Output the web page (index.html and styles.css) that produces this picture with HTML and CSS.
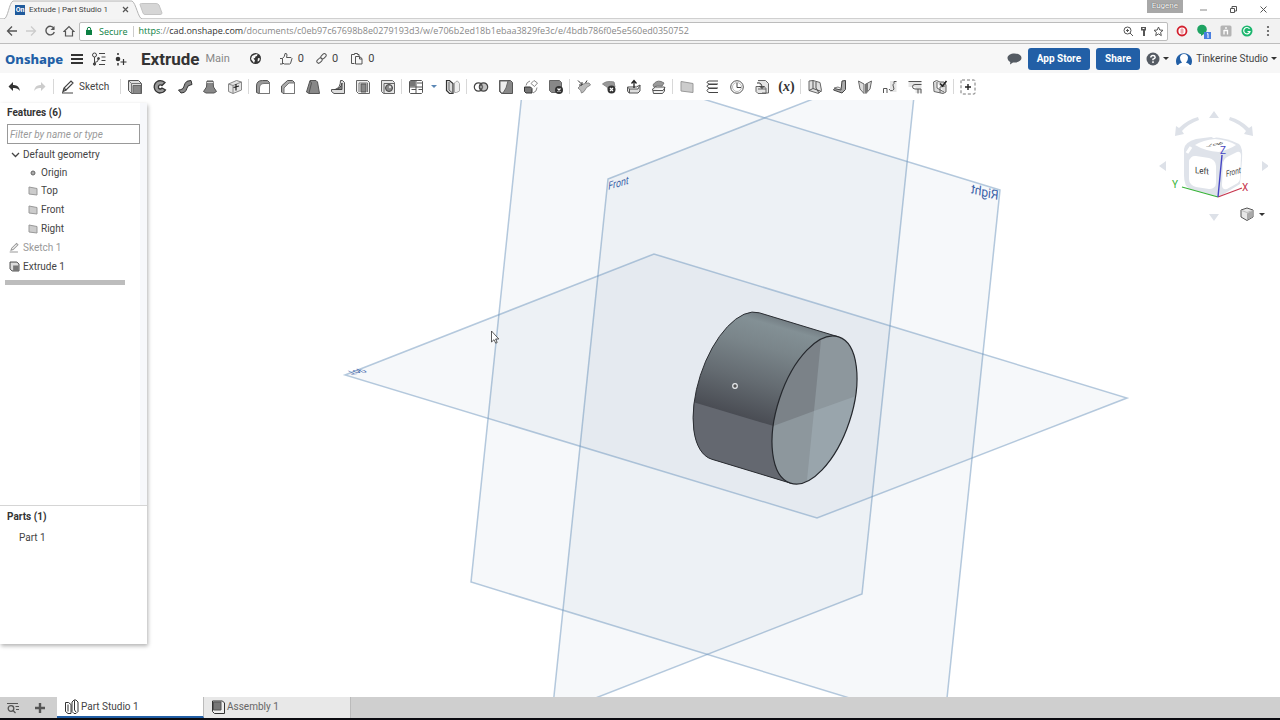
FILE: index.html
```html
<!DOCTYPE html>
<html lang="en">
<head>
<meta charset="utf-8">
<title>Extrude | Part Studio 1</title>
<link rel="stylesheet" href="styles.css">
</head>
<body>
<div class="window">
  <div class="tabstrip">
    <div class="btab">
      <svg class="btab-shape" viewBox="0 0 138 19" preserveAspectRatio="none" aria-hidden="true"><path d="M0 19C4 18 5 3 9 1H128C132 3 134 18 138 19" fill="#f4f4f4" stroke="#b4b4b4"/></svg>
      <span class="favicon">On</span>
      <span class="btab-title">Extrude | Part Studio 1</span>
      <button class="plain" aria-label="Close tab"><svg width="7" height="7" viewBox="0 0 7 7"><path d="M1 1l5 5M6 1L1 6" stroke="#555" stroke-width="1.2"/></svg></button>
    </div>
    <button class="plain newtab" aria-label="New tab"><svg width="24" height="12" viewBox="0 0 24 12"><path d="M1 1.500Q1 .5 2.500.5H17Q19 .5 20 2L23 10Q23 11.500 21 11.500H6Q4.500 11.500 4 10z" fill="#d6d6d6" stroke="#c4c4c4"/></svg></button>
    <span class="user">Eugene</span>
    <div class="winctl">
      <button class="plain" aria-label="Minimize"><svg width="9" height="9"><path d="M1 5h7" stroke="#888"/></svg></button>
      <button class="plain" aria-label="Restore"><svg width="9" height="9" fill="none" stroke="#555"><path d="M1.500 3.500h4v4h-4zM3 3V1.500h4.500V6H6"/></svg></button>
      <button class="plain" aria-label="Close window"><svg width="9" height="9"><path d="M1.500 1.500l6 6M7.500 1.500l-6 6" stroke="#555"/></svg></button>
    </div>
  </div>

  <div class="navbar">
    <button class="plain" aria-label="Back"><svg width="12" height="12" fill="none" stroke="#555" stroke-width="1.300"><path d="M11 6H2M6 1.500L1.500 6 6 10.500"/></svg></button>
    <button class="plain" aria-label="Forward"><svg width="12" height="12" fill="none" stroke="#ccc" stroke-width="1.300"><path d="M1 6h9M6 1.500L10.500 6 6 10.500"/></svg></button>
    <button class="plain" aria-label="Reload"><svg width="12" height="12" fill="none" stroke="#555" stroke-width="1.400"><path d="M10 3.500A4.300 4.300 0 1 0 10.300 7"/><path d="M10.500 1v4h-4z" fill="#555" stroke="none"/></svg></button>
    <button class="plain" aria-label="Home"><svg width="12" height="12" fill="none" stroke="#555" stroke-width="1.200"><path d="M1 6.500L6 1.500l5 5H9.500V11h-7V6.500z"/></svg></button>
    <div class="address">
      <svg width="8" height="10" viewBox="0 0 8 10"><path d="M1 4h6v5H1z" fill="#0b8043"/><path d="M2.300 4.500V3a1.700 1.700 0 0 1 3.400 0v1.500" fill="none" stroke="#0b8043"/></svg>
      <span class="secure">Secure</span>
      <span class="url"><span class="https">https</span>://<b>cad.onshape.com</b>/documents/c0eb97c67698b8e0279193d3/w/e706b2ed18b1ebaa3829fe3c/e/4bdb786f0e5e560ed0350752</span>
      <button class="plain" aria-label="Zoom"><svg width="11" height="11" fill="none" stroke="#555"><circle cx="4.500" cy="4.500" r="3.500"/><path d="M7 7l3 3M3 4.500h3M4.500 3v3"/></svg></button>
      <button class="plain" aria-label="Passwords"><svg width="9" height="11"><path d="M2 1h5v3.500H6V10H4V4.500H2z" fill="#555"/><path d="M3.500 2.500h2" stroke="#fff"/></svg></button>
      <button class="plain" aria-label="Bookmark"><svg width="11" height="11" viewBox="0 0 11 11"><path d="M5.500 1l1.300 3 3.200.3-2.400 2.100.7 3.200-2.800-1.700-2.800 1.700.7-3.200L1 4.300 4.200 4z" fill="none" stroke="#555"/></svg></button>
    </div>
    <div class="exts">
      <button class="plain" aria-label="Ad blocker"><svg width="14" height="14"><circle cx="7" cy="7" r="4.500" fill="#fff" stroke="#d3202e" stroke-width="1.800"/><path d="M5.500 9V5.500L7 4l1.500 1.500V9L7 10z" fill="#d3202e" opacity=".4"/></svg></button>
      <button class="plain" aria-label="Notifications"><svg width="16" height="16"><circle cx="6" cy="6.500" r="4.800" fill="#1ea362"/><path d="M5 11h3l-3 2z" fill="#1ea362"/><rect x="8" y="9" width="7" height="7" fill="#4a7fe0"/><path d="M11 11l1-.5V15" fill="none" stroke="#fff"/></svg></button>
      <button class="plain" aria-label="Honey"><svg width="14" height="14"><rect x="1.500" y="1.500" width="11" height="11" rx="1.500" fill="#b4b4b4"/><path d="M5 6v4.500M5 6.500h3.500v4M7 3v2" stroke="#fff" stroke-width="1.300" fill="none"/></svg></button>
      <button class="plain" aria-label="Grammar"><svg width="14" height="14"><circle cx="7" cy="7" r="5.500" fill="#1cb66e"/><path d="M9.500 4.800A3.200 3.200 0 1 0 10 7.500H7.500" fill="none" stroke="#fff" stroke-width="1.200"/></svg></button>
      <button class="plain" aria-label="Menu"><svg width="4" height="12" fill="#555"><circle cx="2" cy="2" r="1.100"/><circle cx="2" cy="6" r="1.100"/><circle cx="2" cy="10" r="1.100"/></svg></button>
    </div>
  </div>

  <header class="header">
    <a class="logo" href="#">Onshape</a>
    <button class="plain" aria-label="Documents menu"><svg width="14" height="14"><path d="M1 3h12M1 7h12M1 11h12" stroke="#333" stroke-width="2"/></svg></button>
    <button class="plain" aria-label="Versions"><svg width="16" height="14" fill="none" stroke="#444"><circle cx="3.500" cy="3" r="2"/><path d="M3.500 5v8M3.500 10.500q4 0 4-4"/><circle cx="3.500" cy="12" r="1.200" fill="#444"/><circle cx="7.500" cy="6.500" r="1" fill="#444"/><path d="M8 1.500h6M10.500 5h4M10.500 8.500h4M8 12.500h6"/></svg></button>
    <button class="plain" aria-label="Create version"><svg width="13" height="14"><circle cx="4" cy="7" r="2.300" fill="#333"/><path d="M4 1v2M4 11v2.500" stroke="#333" stroke-width="1.500"/><path d="M9.500 7v6M6.500 10h6" stroke="#333" stroke-width="1.200"/></svg></button>
    <h1 class="doc">Extrude</h1>
    <span class="branch">Main</span>
    <svg class="globe" width="13" height="13" viewBox="0 0 13 13"><circle cx="6.500" cy="6.500" r="5.500" fill="#333"/><path d="M6 2.500L8.500 2l-.5 2-1.500.5L6 6 4.500 6.500 6 8.500l-1 2.500-1.500-2L2 7l1-3zM9 6l2 .5-1 2.500-1.500.5z" fill="#f7f7f7"/></svg>
    <button class="plain stat"><svg width="14" height="13" fill="none" stroke="#555"><path d="M1 6.500h2.500V12H1M3.500 6.500Q6 4.500 6 1.500q2-.5 2 1.500l-.5 2.500H12l1 1-1.500 5-1 .5h-5l-2-1"/></svg>0</button>
    <button class="plain stat"><svg width="11" height="11" fill="none" stroke="#555"><rect x="4.500" y="1.500" width="6" height="3.600" rx="1.800" transform="rotate(-45 7.500 3.300)"/><rect x=".5" y="5.800" width="6" height="3.600" rx="1.800" transform="rotate(-45 3.500 7.600)"/></svg>0</button>
    <button class="plain stat"><svg width="13" height="13" fill="none" stroke="#555"><path d="M4.500 11.500h-3v-9h3V1.500h3v1H9v2M5.500 4.500h4l2.500 2v5.500H5.500zM9.500 4.500v2.500H12"/></svg>0</button>
    <div class="header-right">
      <button class="plain" aria-label="Comments"><svg width="15" height="12"><path d="M7.500.5C11.500.5 14.500 2.500 14.500 5S11.500 9.500 7.500 9.500H6L3 11.500 3.300 9C1.500 8 .5 6.500.5 5 .5 2.500 3.500.5 7.500.5z" fill="#555b63"/></svg></button>
      <button class="btn">App Store</button>
      <button class="btn">Share</button>
      <button class="plain help" aria-label="Help"><svg width="14" height="14"><circle cx="7" cy="7" r="6.500" fill="#555b63"/><path d="M4.800 5.500Q5 3.500 7 3.500t2.200 1.800Q9.200 6.500 7 7.300v1M7 9.300v1.700" fill="none" stroke="#fff" stroke-width="1.500"/></svg><i class="caret"></i></button>
      <button class="plain account"><svg width="18" height="17" viewBox="0 0 18 17"><path d="M2 15A8 8 0 1 1 16 15" fill="#225fa6"/><path d="M2.500 16.500q.8-3 4.500-3.800Q4.800 10.500 5 7.500 5.500 4 9 4t4 3.500q.2 3-2 5.200 3.700.8 4.500 3.800z" fill="#fff"/></svg>Tinkerine Studio<i class="caret"></i></button>
    </div>
  </header>

  <div class="toolbar" role="toolbar" aria-label="Part studio tools">
    <button class="tool" aria-label="Undo"><svg viewBox="0 0 16 16"><path d="M6 3v3q6-.5 7 6-2.500-3.500-7-3v3L1.500 7.500z" fill="#333"/></svg></button>
    <button class="tool" aria-label="Redo"><svg viewBox="0 0 16 16"><path d="M9 3v3Q3 5.500 2 12q2.500-3.500 7-3v3l4.500-4.500z" fill="#ccc"/></svg></button>
    <i class="sep"></i>
    <button class="tool sketch"><svg viewBox="0 0 16 16"><path d="M3 12.500l1-3.500 7-7 2 2-7 7-3 1.500zM4 9l2.500 2.500M2 14h11" fill="none" stroke="#444" stroke-width="1.200"/></svg>Sketch</button>
    <i class="sep"></i>
    <button class="tool" aria-label="Extrude"><svg viewBox="0 0 16 16"><path d="M1.500 1.500h10l3 3v10h-10l-3-3z" fill="#ddd" stroke="#555"/><path d="M1.500 1.500l3 3h10M4.500 4.500v10" fill="none" stroke="#777"/><path d="M6 6.500h8v8H6z" fill="#888" stroke="#666"/></svg></button>
    <button class="tool" aria-label="Revolve"><svg viewBox="0 0 16 16"><path d="M13 3.500Q10 1 6 2 2 4 2.200 8.500 3 13 7.500 14q4 0 6-3L10 9q-2 2-3.500 0-.5-2 1-3 1.500-.5 2.500.5z" fill="#999" stroke="#333" stroke-width="1.300"/></svg></button>
    <button class="tool" aria-label="Sweep"><svg viewBox="0 0 16 16"><path d="M1.500 11l2.500 3q4 0 5-2.500t2-4.500q2-1 4-1.500L14 1.500Q9 1.500 8 4.500T6 9.500Q4 11 1.500 11z" fill="#888" stroke="#333"/></svg></button>
    <button class="tool" aria-label="Loft"><svg viewBox="0 0 16 16"><path d="M5 2h6l.5 6 3 4.500L12 14H4l-2.500-1.500L4.500 8z" fill="#888" stroke="#555"/><path d="M5 3.500h6" stroke="#ddd"/></svg></button>
    <button class="tool" aria-label="Thicken"><svg viewBox="0 0 16 16"><path d="M1.500 5l8-3.500 5 1.500v8L6 14.500l-4.500-2zM1.500 5L6 6.500v8M6 6.500L14.500 3" fill="#e4e4e4" stroke="#888"/><path d="M9 5v6.500M6.500 8.500L12 7" stroke="#222" stroke-width="1.200"/></svg></button>
    <i class="sep"></i>
    <button class="tool" aria-label="Fillet"><svg viewBox="0 0 16 16"><path d="M1.500 13.500V7q0-5.500 6-5.500h5L14.500 3.500v11H4z" fill="#999" stroke="#555"/><path d="M4.500 14V9q0-4.500 4.500-4.500h5.500v10H4.500z" fill="#fff" stroke="#777"/></svg></button>
    <button class="tool" aria-label="Chamfer"><svg viewBox="0 0 16 16"><path d="M1.500 13V7l6-5.500h5l2 2v11H3z" fill="#aaa" stroke="#555"/><path d="M4 14V9l5-5h5.500v10.500H4z" fill="#fff" stroke="#777"/></svg></button>
    <button class="tool" aria-label="Draft"><svg viewBox="0 0 16 16"><path d="M5 1.500h6l1.500 1.500 2 11.500H4L1.500 13z" fill="#888" stroke="#555"/><path d="M5 2L6.500 4 4 14" fill="none" stroke="#555"/></svg></button>
    <button class="tool" aria-label="Rib"><svg viewBox="0 0 16 16"><path d="M10.500 1.500h2l2 2v11H4l-2.500-2v-2h4q5-2 5-9z" fill="#ddd" stroke="#555"/><path d="M12 4v6.500H4.500Q11 10 12 4z" fill="#888" stroke="#444"/></svg></button>
    <button class="tool" aria-label="Shell"><svg viewBox="0 0 16 16"><path d="M1.500 1.500h11l2 2v11h-11l-2-2z" fill="#eee" stroke="#666"/><path d="M4 13V4h8.500v9" fill="none" stroke="#777"/><path d="M6 5h5v8H6z" fill="#888" stroke="#555"/></svg></button>
    <button class="tool" aria-label="Hole"><svg viewBox="0 0 16 16"><path d="M1.500 1.500h11l2 2v11h-11l-2-2zM4 4.500h10M4 4.500v10" fill="#e5e5e5" stroke="#666"/><circle cx="9" cy="9" r="3.500" fill="#888" stroke="#444"/><circle cx="10" cy="8" r="1.200" fill="#ddd"/></svg></button>
    <i class="sep"></i>
    <button class="tool" aria-label="Linear pattern"><svg viewBox="0 0 16 16"><path d="M2 2h5.500v5.500H2z" fill="#777"/><path d="M1.500 2.500l1-1h11l1 1v11l-1 1h-11l-1-1zM8 1.500v13M1.500 8h13M9 4h5M10.500 10.500h4M3.500 10.500H8" fill="none" stroke="#555"/></svg></button>
    <button class="plain drop" aria-label="More patterns"><i class="caret blue"></i></button>
    <button class="tool" aria-label="Mirror"><svg viewBox="0 0 16 16"><path d="M1.500 1.500h3l3.500 3v10H4.500l-3-3z" fill="#ddd" stroke="#333" stroke-width="1.200"/><path d="M4 3v8l3.500 3" fill="none" stroke="#666"/><path d="M9.500 4v9.500h2l3-1.500V4.500l-2-2.500-1.500.5z" fill="#eee" stroke="#aaa"/></svg></button>
    <i class="sep"></i>
    <button class="tool" aria-label="Boolean"><svg viewBox="0 0 16 16"><circle cx="5.500" cy="8" r="4.200" fill="none" stroke="#444" stroke-width="1.200"/><circle cx="10.500" cy="8" r="4.200" fill="#aaa" fill-opacity=".7" stroke="#444" stroke-width="1.200"/><path d="M8 4.700Q10.500 8 8 11.300 5.500 8 8 4.700" fill="#ddd" stroke="#444"/></svg></button>
    <button class="tool" aria-label="Split"><svg viewBox="0 0 16 16"><path d="M1.500 1.500h11l2 2v11h-11l-2-2z" fill="#888" stroke="#555"/><path d="M2 2h8L8 9l-3 5H3.500L2 12z" fill="#eee" stroke="#666"/></svg></button>
    <button class="tool" aria-label="Transform"><svg viewBox="0 0 16 16"><path d="M1.500 8h6l1.500 1.500V14H3l-1.500-1.500z" fill="#777" stroke="#333"/><path d="M3 6.500Q3.500 3 7 2M8 4.500l3-3 3.500 2.500-3 3.500zM14 8.500q0 4-4 5.500" fill="none" stroke="#888"/></svg></button>
    <button class="tool" aria-label="Delete part"><svg viewBox="0 0 16 16"><path d="M1.500 1.500h10l2 2v10h-10l-2-2z" fill="#888" stroke="#666"/><circle cx="11" cy="11" r="4" fill="#333"/><path d="M9.500 9.500l3 3M12.500 9.500l-3 3" stroke="#fff" stroke-width="1.200"/></svg></button>
    <i class="sep"></i>
    <button class="tool" aria-label="Modify fillet"><svg viewBox="0 0 16 16"><path d="M2 9Q6 4 13 4l1.500 2Q10 7.500 8 12.500L5.500 14q0-3-3.500-5z" fill="#bbb" stroke="#888"/><path d="M2 1.500l4 4M6 3v3H3M11 1.500L9.500 4" stroke="#333" fill="none"/></svg></button>
    <button class="tool" aria-label="Delete face"><svg viewBox="0 0 16 16"><path d="M1.500 5Q5 1.500 13 3l1 5-6 3-2-3z" fill="#999" stroke="#888"/><circle cx="10.500" cy="10.500" r="4" fill="#333"/><path d="M9 9l3 3M12 9l-3 3" stroke="#fff" stroke-width="1.200"/></svg></button>
    <button class="tool" aria-label="Move face"><svg viewBox="0 0 16 16"><path d="M1.500 8h9l3.500-2v6l-2 2h-9l-1.500-2zM1.500 8l2 2H12l2-4M3.500 10v4" fill="#ddd" stroke="#555"/><path d="M8 9V2M5.500 4.500L8 1.500l2.500 3" fill="none" stroke="#222" stroke-width="1.300"/></svg></button>
    <button class="tool" aria-label="Replace face"><svg viewBox="0 0 16 16"><path d="M2 6q3-5 8-3.500l3 1.500-2 3q-5-1-8 1z" fill="#999" stroke="#777"/><path d="M1.500 10l3-2h9v4l-2 2.500h-9zM2 11.500h10l2-3" fill="#eee" stroke="#555"/></svg></button>
    <i class="sep"></i>
    <button class="tool" aria-label="Plane"><svg viewBox="0 0 16 16"><path d="M2 2.500l12 2v9L2 12z" fill="#ccc" stroke="#999"/></svg></button>
    <button class="tool" aria-label="Helix"><svg viewBox="0 0 16 16"><path d="M14 2H5Q1 3 5 5h9M13 5.500H5Q1 7 5 9h9M13 9.500H5Q1 11.500 5 13.500h9" fill="none" stroke="#444"/></svg></button>
    <button class="tool" aria-label="3D fit spline"><svg viewBox="0 0 16 16"><circle cx="8" cy="8" r="6.300" fill="none" stroke="#555"/><circle cx="8" cy="8" r="4.500" fill="none" stroke="#bbb"/><path d="M8 4v4.500h4" fill="none" stroke="#444"/></svg></button>
    <button class="tool" aria-label="Derived"><svg viewBox="0 0 16 16"><path d="M4 1.500h7.500l3 3v9.500H8M2 7.500h8l2 2v5H4l-2-2zM4 10h8" fill="#e4e4e4" stroke="#666"/><path d="M3 4q5-1 5 5M5.500 7L8 9.500 10.500 7" fill="none" stroke="#333"/></svg></button>
    <button class="tool variable">(<i>x</i>)</button>
    <i class="sep"></i>
    <button class="tool" aria-label="Sheet metal model"><svg viewBox="0 0 16 16"><path d="M2 2l4-.5 7 2 1.500 8-3 3L2 11.500z" fill="#e0e0e0" stroke="#666"/><path d="M6 1.500v8l8.500 3M6 9.500l-4 2M9 3v6l3 5" fill="none" stroke="#555"/></svg></button>
    <button class="tool" aria-label="Flange"><svg viewBox="0 0 16 16"><path d="M10 2l3.500-.5v9L10 14l-8.500-3 1-1.500L9 11z" fill="#aaa" stroke="#444"/><path d="M2 9l4-1 4 2" fill="none" stroke="#777"/></svg></button>
    <button class="tool" aria-label="Hem"><svg viewBox="0 0 16 16"><path d="M1.500 2L7 5v9.500L3 10zM14.500 2L9 5v9.500l4-4.500z" fill="#ddd" stroke="#666"/><path d="M8 5l3-1v8l-3 2.500z" fill="#777"/></svg></button>
    <button class="tool" aria-label="Tab"><svg viewBox="0 0 16 16"><path d="M8 2h6.500v11H8z" fill="#e5e5e5"/><path d="M1.500 14V9.500H5V14M7 10q1 2.500 3.500 1.500t1-3.500T12 4.500V2.500h2.500" fill="none" stroke="#555"/></svg></button>
    <button class="tool" aria-label="Bend relief"><svg viewBox="0 0 16 16"><path d="M1.500 2h13v12h-6V8h-7z" fill="#e5e5e5"/><path d="M1.500 2.500h13M14.500 5.500H8Q5.500 5.500 5.500 7.700T8 10h6v4.500M11 10v4.500" fill="none" stroke="#555"/></svg></button>
    <button class="tool" aria-label="Finish sheet metal"><svg viewBox="0 0 16 16"><path d="M1.500 3l3-1.500L8 3h4l2 3v7l-3 1.500-9-2zM5 3v6l7 4M8 8l5-1M8 8v6" fill="#ddd" stroke="#666"/><path d="M8 4.500l2.500 2.500 4-5" fill="none" stroke="#222" stroke-width="1.600"/></svg></button>
    <i class="sep"></i>
    <button class="tool" aria-label="Add custom feature"><svg viewBox="0 0 16 16"><rect x="1" y="1" width="14" height="14" rx="1" fill="none" stroke="#777" stroke-dasharray="3 2"/><path d="M8 5v6M5 8h6" stroke="#222" stroke-width="1.400"/></svg></button>
  </div>

  <main class="stage">
    <svg class="scene" viewBox="0 100 1280 597" preserveAspectRatio="xMidYMid slice" role="img" aria-label="Extruded cylinder with Front, Right and Top planes">
      <defs>
        <linearGradient id="barrel" gradientUnits="userSpaceOnUse" x1="798" y1="324" x2="769" y2="424">
          <stop offset="0" stop-color="#737d83"/><stop offset=".08" stop-color="#839095"/><stop offset=".3" stop-color="#7a858a"/><stop offset=".65" stop-color="#646b71"/><stop offset="1" stop-color="#4a4d54"/>
        </linearGradient>
        <clipPath id="body"><path d="M759.300 312.800L838.300 336.800L790.700 483.200L711.700 459.200A36.700 76.900 18.300 0 1 759.300 312.800Z"/></clipPath>
        <clipPath id="face"><ellipse cx="814.500" cy="410" rx="36.800" ry="77" transform="rotate(18.300 814.500 410)"/></clipPath>
      </defs>
      <g class="plane">
        <path d="M608 179L918 58L862 594L552 715Z"/>
        <path d="M1000 190L527 45L471 582L944 727Z"/>
        <path d="M345 375L654 254L1127 398L817 518Z"/>
      </g>
      <g class="plane-label">
        <text transform="matrix(.88 -.26 -.1 1.150 608 190)" font-size="10">Front</text>
        <text transform="matrix(-1 -.25 -.1 1.100 998 200)" font-size="12">Right</text>
        <text transform="matrix(1 -.08 -.8 -.45 345 371)" font-size="11">Top</text>
      </g>
      <g clip-path="url(#body)">
        <path d="M680 300H860V500H680z" fill="url(#barrel)"/>
        <path d="M680 398L790 431V500H680z" fill="#646870"/>
      </g>
      <path d="M838.300 336.800L759.300 312.800A36.700 76.900 18.300 0 0 711.700 459.200L790.700 483.200" fill="none" stroke="#2b2e33"/>
      <g clip-path="url(#face)">
        <path d="M760 330H870V490H760z" fill="#8d979d"/>
        <path d="M760 330H822L814 411L760 431z" fill="#7b8288"/>
        <path d="M814 411L870 391V490H806z" fill="#99a5ac"/>
      </g>
      <ellipse cx="814.500" cy="410" rx="36.800" ry="77" transform="rotate(18.300 814.500 410)" fill="none" stroke="#25282d" stroke-width="1.200"/>
      <circle cx="735" cy="386" r="2.300" fill="#555" stroke="#e8ebee" stroke-width="1.200"/>
      <path d="M491.500 331v11l2.500-2.300 1.700 3.500 1.500-.7-1.600-3.500h3.200z" fill="#fff" stroke="#333" stroke-width=".8"/>
    </svg>

    <aside class="panel">
      <section class="features">
        <h2>Features (6)</h2>
        <input class="filter" type="text" aria-label="Filter features" placeholder="Filter by name or type">
        <ul class="tree">
          <li class="group"><svg width="9" height="8"><path d="M1 2l3.500 3.500L8 2" fill="none" stroke="#444" stroke-width="1.300"/></svg>Default geometry</li>
          <li class="child"><svg width="10" height="10"><circle cx="5" cy="5" r="2" fill="#aaa" stroke="#666"/></svg>Origin</li>
          <li class="child"><svg width="10" height="10"><path d="M1 1l8 1.500V9L1 8z" fill="#ccc" stroke="#999"/></svg>Top</li>
          <li class="child"><svg width="10" height="10"><path d="M1 1l8 1.500V9L1 8z" fill="#ccc" stroke="#999"/></svg>Front</li>
          <li class="child"><svg width="10" height="10"><path d="M1 1l8 1.500V9L1 8z" fill="#ccc" stroke="#999"/></svg>Right</li>
          <li class="muted"><svg width="11" height="11" viewBox="0 0 16 16"><path d="M3 12l1-3 7-7 2 2-7 7-3 1zM1 14.500h12" fill="none" stroke="#999" stroke-width="1.500"/></svg>Sketch 1</li>
          <li><svg width="11" height="11" viewBox="0 0 16 16"><path d="M1.500 1.500h10l3 3v10h-10l-3-3z" fill="#ddd" stroke="#444" stroke-width="1.400"/><path d="M6 6.500h8v8H6z" fill="#777"/></svg>Extrude 1</li>
        </ul>
        <div class="rollback"></div>
      </section>
      <section class="parts">
        <h2>Parts (1)</h2>
        <ul class="tree"><li class="part">Part 1</li></ul>
      </section>
    </aside>

    <div class="viewcube">
      <svg width="112" height="116" viewBox="1156 108 112 116" role="img" aria-label="View cube">
        <g fill="#dde1e8">
          <path d="M1209 118l5-7 5 7zM1209 214h10l-5 7zM1166 161v10l-7-5zM1262 161v10l7-5z"/>
          <path d="M1199 120l-1-3q-11 3-19 11l-3-2-1 10 9-2-2-3q6-7 17-11zM1229 120l1-3q11 3 19 11l3-2 1 10-9-2 2-3q-6-7-17-11z"/>
        </g>
        <path d="M1184 149Q1185 142 1196 139L1211 137Q1228 138 1239 144 1243 147 1242 160L1240 184 1219 197 1190 189Q1184 187 1184 175z" fill="#dfe3ea"/>
        <path d="M1195 145q8-5 20-6 13 1 21 6-6 4-17 7-14-1-24-7z" fill="#fff"/>
        <rect x="1189" y="156" width="27" height="31" rx="7" transform="skewY(8) translate(0 -168)" fill="#fff"/>
        <path d="M1223 163q1-5 6-7l8-4q4-1 4 4l-1 22q0 4-4 6l-9 5q-5 1-5-4z" fill="#fff"/>
        <path d="M1191 147l-4 6M1214 138v-1" stroke="#fff" stroke-width="3"/>
        <path d="M1182 187l36 10" stroke="#35b335" stroke-width="1.200"/>
        <path d="M1218 197l24-9" stroke="#c6344d" stroke-width="1.200"/>
        <path d="M1218 197l4-42" stroke="#4444c4" stroke-width="1.400"/>
        <g font-size="10">
          <text transform="matrix(1 .12 0 1.100 1195 173)" font-size="8" fill="#333">Left</text>
          <text transform="matrix(.8 -.22 0 1.100 1226 177)" font-size="8" fill="#444">Front</text>
          <text transform="matrix(1 -.1 .5 -.45 1209 144)" font-size="9" fill="#444">Top</text>
          <text x="1172" y="188" fill="#35b335">Y</text>
          <text x="1242" y="191" fill="#c6344d">X</text>
          <text x="1220" y="154" fill="#4444c4">Z</text>
        </g>
      </svg>
      <button class="plain shade" aria-label="View options"><svg width="14" height="14"><path d="M1 3l6-2 6 2v7l-6 3.500L1 10z" fill="#e8e8e8" stroke="#555"/><path d="M7 6.500l5.500-3V10L7 13z" fill="#aaa"/><path d="M1.500 3.500l5.500 2 5.500-2" fill="none" stroke="#bbb"/></svg><i class="caret"></i></button>
    </div>
  </main>

  <nav class="bottom" aria-label="Document tabs">
    <button class="plain bico" aria-label="Tab manager"><svg width="14" height="12" fill="none" stroke="#555"><path d="M1 1.500h11M9.500 4.500H13M10 7.500h3" stroke-width="1.200"/><circle cx="5" cy="6.500" r="2.800" stroke-width="1.300"/><path d="M7 8.500l2.500 2.500" stroke-width="1.300"/></svg></button>
    <button class="plain bico" aria-label="Add tab"><svg width="10" height="10"><path d="M5 0v10M0 5h10" stroke="#555" stroke-width="2.400"/></svg></button>
    <button class="dtab active"><svg width="15" height="15" viewBox="0 0 15 15" fill="#fff" stroke="#333"><path d="M1.500 3.500h3l2.500 2v9H4l-2.500-2zM4 5.500v7"/><path d="M8 3l2-2h2l2 2v9.500l-2 2h-2L8 12.500zM10.500 1.500v9.500L12 13"/></svg>Part Studio 1</button>
    <button class="dtab"><svg width="14" height="14" viewBox="0 0 14 14"><path d="M1.500 1h10l2 2v10.500h-10l-2-2z" fill="#eee" stroke="#333"/><path d="M2.500 2H10v8H2.500z" fill="#777" stroke="#555"/></svg>Assembly 1</button>
  </nav>
  <div class="taskbar"></div>
</div>
</body>
</html>
```
FILE: styles.css
```css
* { box-sizing: border-box; }
body { margin: 0; }
svg { display: block; flex: none; }
button, input { font: inherit; color: inherit; margin: 0; }
h1, h2, ul { margin: 0; padding: 0; font: inherit; }
ul { list-style: none; }

.window {
  height: 100vh;
  display: flex;
  flex-direction: column;
  background: #fff;
  color: #444;
  font-family: Roboto, sans-serif;
  font-size: 10px;
  line-height: 16px;
}
.plain {
  display: flex;
  align-items: center;
  justify-content: center;
  border: 0;
  padding: 0;
  background: none;
}
.caret {
  border: 3px solid transparent;
  border-top-color: #333;
  border-bottom: 0;
}
.caret.blue { border-top-color: #5b87b5; }

/* Browser frame */
.tabstrip {
  height: 19px;
  flex: none;
  display: flex;
  padding-left: 4px;
  border-bottom: 1px solid #d0d0d0;
}
.btab {
  position: relative;
  height: 19px;
  width: 138px;
  display: flex;
  align-items: center;
  padding: 0 13px 0 11px;
  font-size: 8px;
}
.btab-shape { position: absolute; inset: 0; width: 100%; height: 100%; }
.btab > :not(.btab-shape) { position: relative; }
.favicon {
  width: 10px;
  height: 10px;
  margin-right: 4px;
  background: #1f5a9c;
  color: #fff;
  font-size: 7px;
  font-weight: 700;
  line-height: 10px;
  text-align: center;
}
.btab-title { flex: 1; white-space: nowrap; }
.newtab { align-self: center; margin-left: -3px; }
.user {
  height: 13px;
  margin-left: auto;
  padding: 0 5px;
  background: #a8a8a8;
  color: #fff;
  font-size: 8px;
  line-height: 12px;
  text-shadow: 0 0 1px #333;
}
.winctl { display: flex; align-items: center; gap: 21px; padding: 0 12px 0 16px; }

.navbar {
  height: 25px;
  flex: none;
  display: flex;
  align-items: center;
  gap: 7px;
  padding: 0 10px 0 6px;
  background: #f2f2f2;
  border-bottom: 1px solid #bdbdbd;
}
.address {
  flex: 1;
  height: 19px;
  display: flex;
  align-items: center;
  gap: 5px;
  margin-left: -3px;
  padding: 0 3px 0 5px;
  background: #fff;
  border: 1px solid #bcbcbc;
  border-radius: 2px;
  font-family: "Open Sans", sans-serif;
  font-size: 9px;
  color: #888;
}
.secure { color: #0b8043; padding: 0 5px 0 1px; border-right: 1px solid #ccc; line-height: 11px; }
.url { flex: 1; white-space: nowrap; }
.url b { font-weight: 400; color: #333; }
.https { color: #0b8043; }
.exts { display: flex; align-items: center; gap: 7px; }
.exts .plain:last-child { margin-left: 5px; }

/* Document header */
.header {
  height: 29px;
  flex: none;
  display: flex;
  align-items: center;
  padding: 0 3px 0 5px;
  background: #f7f7f7;
}
.logo {
  width: 56px;
  margin-right: 9px;
  color: #225fa6;
  font-family: "Noto Sans", sans-serif;
  font-size: 13px;
  font-weight: 800;
  line-height: 20px;
  text-decoration: none;
}
.header > .plain { margin-right: 7px; }
.doc { margin: 0 6px 0 7px; font-size: 17px; font-weight: 700; color: #333; }
.branch { font-size: 11px; line-height: 12px; color: #888; }
.globe { margin: 0 17px 0 19px; }
.header > .stat { gap: 5px; margin-right: 12px; font-size: 11px; }
.header-right { margin-left: auto; display: flex; align-items: center; gap: 6px; }
.btn {
  height: 22px;
  padding: 0 9px;
  border: 0;
  border-radius: 3px;
  background: #225fa6;
  color: #fff;
  font-weight: 700;
}
.help { gap: 3px; }
.account { gap: 3px; }

/* Feature toolbar */
.toolbar {
  height: 27px;
  flex: none;
  display: flex;
  align-items: center;
  padding-left: 2px;
}
.tool {
  width: 25px;
  height: 25px;
  flex: none;
  display: flex;
  align-items: center;
  justify-content: center;
  border: 0;
  padding: 0;
  background: none;
}
.tool svg { width: 16px; height: 16px; }
.sketch { width: 64px; gap: 3px; justify-content: flex-start; padding-left: 5px; }
.sep { width: 1px; height: 15px; margin: 0 1px; background: #d8d8d8; flex: none; }
.drop { width: 12px; height: 25px; }
.variable { font-family: "Liberation Serif", serif; font-size: 14px; font-weight: 700; color: #333; }

/* Model area */
.stage { position: relative; flex: 1; min-height: 0; overflow: hidden; display: flex; }
.scene { position: absolute; inset: 0; width: 100%; height: 100%; }
.plane path { fill: rgba(90, 135, 170, .055); stroke: rgba(110, 150, 190, .5); stroke-width: 1.5; }
.plane-label { fill: #3a62a8; }
.panel {
  position: relative;
  width: 147px;
  margin: 3px 0 53px;
  display: flex;
  flex-direction: column;
  background: #fff;
  box-shadow: 1px 2px 4px rgba(0, 0, 0, .3);
}
.panel h2 { padding-left: 7px; font-weight: 700; color: #333; }
.features { flex: 1; padding-top: 2px; border-right: 7px solid #f7f8fb; }
.filter {
  display: block;
  width: 133px;
  height: 20px;
  margin: 3px 0 0 7px;
  padding: 0 2px;
  border: 1px solid #999;
  font-style: italic;
}
.filter::placeholder { color: #999; opacity: 1; }
.tree { padding-top: 1px; }
.tree li { display: flex; align-items: center; height: 19px; gap: 3px; padding-left: 9px; }
.tree .group { padding-left: 11px; height: 20px; }
.tree .child { padding-left: 28px; }
.tree .muted { color: #999; }
.tree .group + .child { height: 16px; }
.rollback { width: 120px; height: 5px; margin: 4px 0 0 5px; background: #bdbdbd; }
.parts { height: 139px; border-top: 1px solid #d5d5d5; padding-top: 3px; }
.tree .part { padding-left: 19px; margin-top: 2px; }
.viewcube { position: absolute; top: 8px; right: 12px; }
.shade { position: absolute; right: 3px; bottom: 3px; gap: 5px; }

/* Document tabs */
.bottom { height: 21px; flex: none; display: flex; background: #cfcfcf; padding-left: 5px; }
.bico { width: 15px; margin-right: 12px; }
.bico + .dtab { margin-left: -2px; }
.dtab {
  width: 147px;
  display: flex;
  align-items: center;
  gap: 2px;
  padding: 0 7px 2px;
  border: 0;
  border-right: 1px solid #bbb;
  background: #e8e8e8;
  color: #666;
}
.dtab.active { background: #fff; color: #444; padding-bottom: 0; border-bottom: 2px solid #225fa6; }
.taskbar { height: 2px; flex: none; background: #0b0b10; }
```
